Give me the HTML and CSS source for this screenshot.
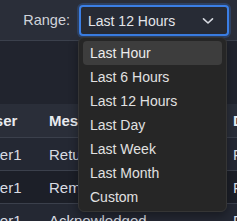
FILE: index.html
```html
<!DOCTYPE html>
<html>
<head>
<meta charset="utf-8">
<link rel="stylesheet" href="styles.css">
</head>
<body>
<div class="topbar">
  <span class="label">Range:</span>
  <div class="select">
    <span class="value">Last 12 Hours</span>
    <svg class="chev" width="12" height="8" viewBox="0 0 12 8"><path d="M1.5 1.8 L6 6 L10.5 1.8" fill="none" stroke="#d6d9e0" stroke-width="1.6" stroke-linecap="round" stroke-linejoin="round"/></svg>
  </div>
  <div class="menu">
    <div class="item active">Last Hour</div>
    <div class="item">Last 6 Hours</div>
    <div class="item">Last 12 Hours</div>
    <div class="item">Last Day</div>
    <div class="item">Last Week</div>
    <div class="item">Last Month</div>
    <div class="item">Custom</div>
  </div>
</div>
<div class="tablewrap">
  <table class="grid">
    <thead>
      <tr><th class="c1">User</th><th class="c2">Message</th><th class="c3">Date</th></tr>
    </thead>
    <tbody>
      <tr class="odd"><td>user1</td><td>Returned</td><td>Fri</td></tr>
      <tr class="even"><td>user1</td><td>Reminder</td><td>Fri</td></tr>
      <tr class="odd"><td>user1</td><td>Acknowledged</td><td>Fri</td></tr>
    </tbody>
  </table>
</div>
</body>
</html>
```

FILE: styles.css
```css
html, body {
  margin: 0;
  padding: 0;
  background: #21242e;
  font-family: "Liberation Sans", Arial, sans-serif;
  overflow: hidden;
}
.topbar {
  position: relative;
  height: 40px;
  background: #2a2e39;
  border-bottom: 1px solid #3b404c;
  display: flex;
  align-items: center;
  justify-content: flex-end;
  padding-right: 8px;
  gap: 9px;
}
.label {
  color: #d0d3da;
  font-size: 14.5px;
}
.select {
  box-sizing: border-box;
  width: 150px;
  height: 31px;
  margin-top: 1px;
  border: 2px solid #3b7fe6;
  border-radius: 4px;
  box-shadow: 0 0 0 2px rgba(59, 127, 230, 0.25);
  background: #272b35;
  display: flex;
  align-items: center;
  justify-content: space-between;
  padding: 0 13px 0 7px;
}
.value {
  color: #e3e5ea;
  font-size: 14px;
}
.chev {
  display: block;
}
.menu {
  position: absolute;
  left: 78px;
  top: 37px;
  width: 149px;
  height: 175px;
  box-sizing: border-box;
  background: #262626;
  border: 1px solid #353535;
  border-radius: 6px;
  padding: 3px 4px;
  z-index: 5;
  box-shadow: 0 4px 10px rgba(0,0,0,0.35);
}
.item {
  height: 24px;
  line-height: 24px;
  padding-left: 7px;
  color: #e1e1e1;
  font-size: 14px;
  border-radius: 4px;
}
.item.active {
  background: #3d3d3d;
  color: #ececec;
}
.tablewrap {
  margin-top: 63px;
  overflow: hidden;
}
.grid {
  border-collapse: collapse;
  margin-left: -25px;
  table-layout: fixed;
  width: 300px;
}
.grid th, .grid td {
  text-align: left;
  padding: 0 9px;
  font-size: 15px;
  white-space: nowrap;
  overflow: hidden;
}
.grid th {
  height: 33px;
  background: #2a2e39;
  color: #e8eaef;
  font-weight: bold;
}
.grid td {
  height: 32px;
  color: #d9dce3;
  border-top: 1px solid #3b404c;
}
.c1 { width: 47px; }
.c2 { width: 166px; }
.c3 { width: 60px; }
.odd td { background: #242833; }
.even td { background: #1c1f28; }
```
